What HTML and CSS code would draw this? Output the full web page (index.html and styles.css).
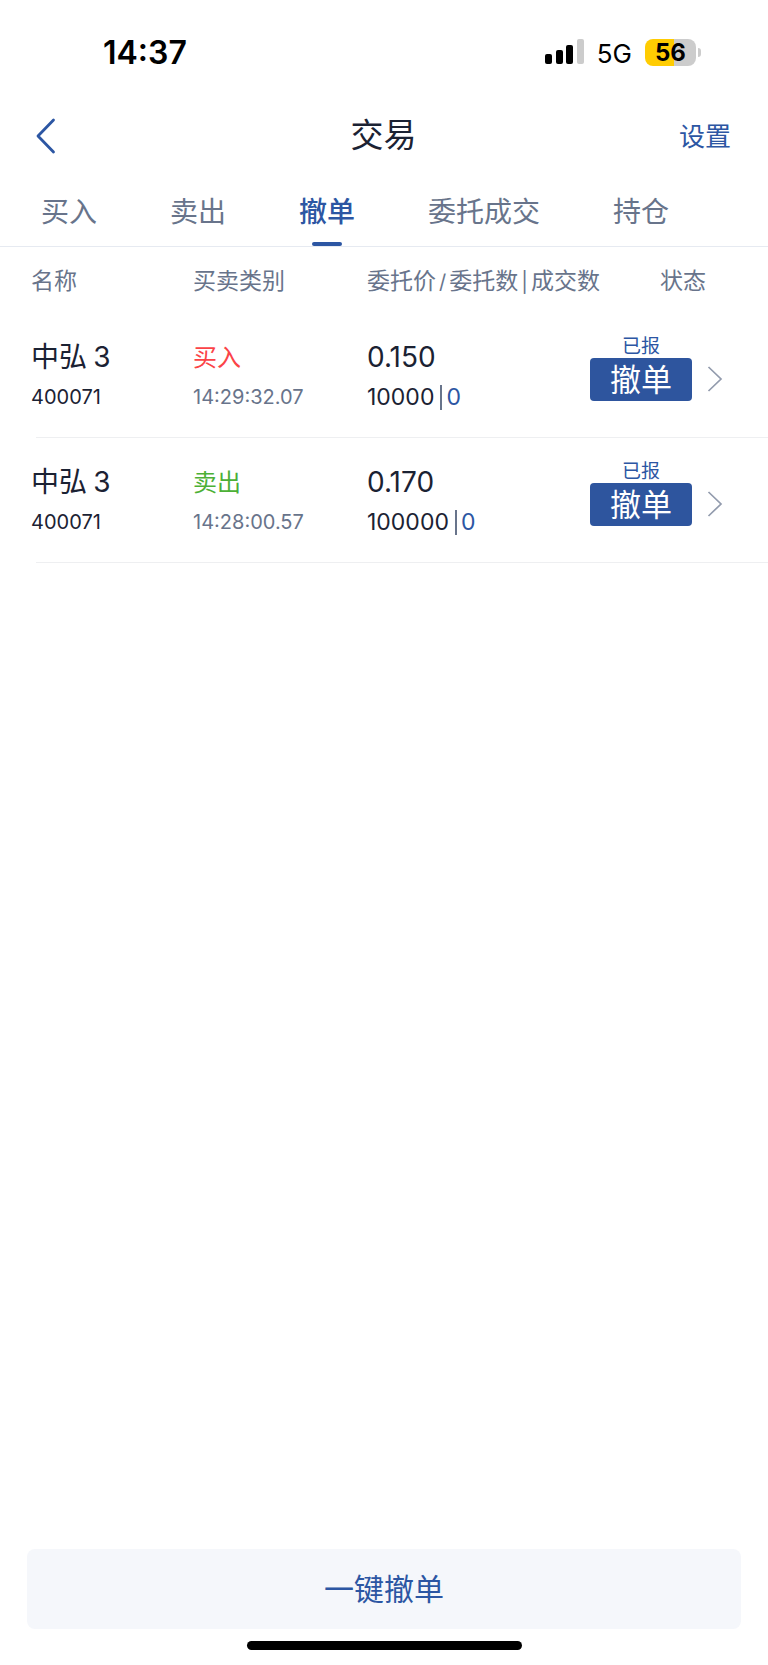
FILE: index.html
```html
<!DOCTYPE html>
<html lang="zh-CN">
<head>
<meta charset="utf-8">
<meta name="viewport" content="width=device-width, initial-scale=1">
<title>交易</title>
<link rel="stylesheet" href="styles.css">
</head>
<body>
<div class="screen">
  <div class="status-bar">
    <span class="clock">14:37</span>
    <div class="indicators">
      <svg class="signal" width="40" height="26" viewBox="0 0 40 26" aria-hidden="true">
        <rect x="0" y="15" width="7" height="10" rx="2"/>
        <rect x="11" y="11" width="7" height="14" rx="2"/>
        <rect x="21" y="6" width="7" height="19" rx="2"/>
        <rect x="32" y="0" width="7" height="25" rx="2" fill="#ccc"/>
      </svg>
      <span class="network">5G</span>
      <span class="battery"><span class="battery-body">56</span><span class="battery-tip"></span></span>
    </div>
  </div>

  <header class="nav-bar">
    <button class="back" type="button" aria-label="返回">
      <svg width="20" height="36" viewBox="0 0 20 36" aria-hidden="true"><path d="M17.500 2 2 18 17.500 34" fill="none" stroke="currentColor" stroke-width="2.800" stroke-linecap="round" stroke-linejoin="round"/></svg>
    </button>
    <h1 class="title">交易</h1>
    <a class="settings" href="#">设置</a>
  </header>

  <nav class="tabs">
    <a class="tab" href="#">买入</a>
    <a class="tab" href="#">卖出</a>
    <a class="tab tab-active" href="#" aria-current="page">撤单</a>
    <a class="tab" href="#">委托成交</a>
    <a class="tab" href="#">持仓</a>
  </nav>

  <main class="content">
    <table class="orders">
      <colgroup>
        <col class="col-name"><col class="col-side"><col class="col-price"><col class="col-state"><col class="col-more">
      </colgroup>
      <thead>
        <tr>
          <th class="cell-name" scope="col">名称</th>
          <th scope="col">买卖类别</th>
          <th scope="col">委托价<span class="sep">/</span>委托数<span class="sep">|</span>成交数</th>
          <th class="head-state" scope="col" colspan="2">状态</th>
        </tr>
      </thead>
      <tbody>
        <tr class="order">
          <td class="cell-name"><div class="main-line"><span class="name">中弘 </span>3</div><div class="code">400071</div></td>
          <td><div class="side buy">买入</div><div class="time">14:29:32.07</div></td>
          <td><div class="main-line">0.150</div><div class="amount">10000<span class="filled">0</span></div></td>
          <td class="cell-state"><div class="state">已报</div><button class="cancel" type="button">撤单</button></td>
          <td class="cell-more"><a class="more" href="#" aria-label="详情"><svg width="16" height="26" viewBox="0 0 16 26" aria-hidden="true"><path d="M1.500 1 14 13 1.500 25" fill="none" stroke="currentColor" stroke-width="1.700"/></svg></a></td>
        </tr>
        <tr class="order">
          <td class="cell-name"><div class="main-line"><span class="name">中弘 </span>3</div><div class="code">400071</div></td>
          <td><div class="side sell">卖出</div><div class="time">14:28:00.57</div></td>
          <td><div class="main-line">0.170</div><div class="amount">100000<span class="filled">0</span></div></td>
          <td class="cell-state"><div class="state">已报</div><button class="cancel" type="button">撤单</button></td>
          <td class="cell-more"><a class="more" href="#" aria-label="详情"><svg width="16" height="26" viewBox="0 0 16 26" aria-hidden="true"><path d="M1.500 1 14 13 1.500 25" fill="none" stroke="currentColor" stroke-width="1.700"/></svg></a></td>
        </tr>
      </tbody>
    </table>
  </main>

  <footer class="bottom">
    <button class="cancel-all" type="button">一键撤单</button>
    <div class="home-bar"></div>
  </footer>
</div>
</body>
</html>
```
FILE: styles.css
```css
* { box-sizing: border-box; }

body {
  margin: 0;
  background: #fff;
  color: #1b2233;
  font-family: Inter, "Noto Sans CJK SC", sans-serif;
}

button { margin: 0; padding: 0; border: 0; background: none; font: inherit; color: inherit; cursor: pointer; }
a { color: inherit; text-decoration: none; }
svg { display: block; }

.screen { display: flex; flex-direction: column; min-height: 100vh; }

.status-bar {
  display: flex;
  align-items: center;
  justify-content: space-between;
  height: 104px;
  padding: 0 67px 0 103px;
  color: #000;
}
.clock { padding-top: 2px; font-size: 32px; font-weight: 600; line-height: 40px; }
.indicators { display: flex; align-items: center; }
.network { margin-left: 12px; padding-top: 3px; font-size: 26px; line-height: 32px; }
.battery { display: flex; align-items: center; gap: 2px; margin-left: 13px; }
.battery-body {
  width: 51px;
  border-radius: 8px;
  background: linear-gradient(to right, #ffcc02 56%, #ccc 56%);
  font-size: 24px;
  font-weight: 700;
  line-height: 27px;
  text-align: center;
}
.battery-tip { width: 3px; height: 9px; border-radius: 0 3px 3px 0; background: #ccc; }

.nav-bar {
  display: grid;
  grid-template-columns: 1fr auto 1fr;
  align-items: center;
  height: 64px;
  padding: 0 37px 0 36px;
}
.back { justify-self: start; color: #2c56a3; }
.title { margin: 0; padding-bottom: 2px; font-size: 33px; font-weight: 400; line-height: 48px; }
.settings { justify-self: end; padding-top: 2px; color: #2c56a3; font-size: 26px; line-height: 40px; }

.tabs {
  display: flex;
  gap: 73px;
  height: 79px;
  padding: 16px 41px 0;
  border-bottom: 1px solid #e6eaf1;
  color: #68748b;
  font-size: 28px;
  line-height: 56px;
}
.tab { display: flex; flex-direction: column; justify-content: space-between; white-space: nowrap; }
.tab-active { color: #2c56a3; font-weight: 500; }
.tab-active::after { content: ""; align-self: center; width: 30px; height: 4px; border-radius: 2px; background: #2c56a3; }

.orders { width: 100%; table-layout: fixed; border-collapse: collapse; }
.col-name { width: 193px; }
.col-side { width: 174px; }
.col-state { width: 122px; }
.col-more { width: 66px; }

th {
  height: 66px;
  padding: 0 0 3px;
  color: #68748b;
  font-size: 23px;
  font-weight: 400;
  text-align: left;
  white-space: nowrap;
}
td { padding: 25px 0 20px; vertical-align: top; white-space: nowrap; }
th.cell-name, td.cell-name { padding-left: 31px; }
.sep { padding: 0 3px; font-size: 20px; }
th.head-state { padding-right: 62px; text-align: right; }

.order { background: linear-gradient(#eeeff1, #eeeff1) 36px 100% / 100% 1px no-repeat; }
.main-line, .side { font-size: 28px; line-height: 39px; }
.name { font-family: "Noto Sans CJK SC", sans-serif; line-height: 1; }
.side { font-size: 24px; }
.buy { color: #fb4347; }
.sell { color: #4cb036; }
.code, .time { font-size: 20px; line-height: 41px; }
.time { color: #68748b; }
.amount { display: flex; align-items: center; gap: 6px; font-size: 23px; line-height: 41px; }
.filled { display: flex; align-items: center; gap: 4px; color: #2c56a3; }
.filled::before { content: ""; width: 2px; height: 25px; background: #68748b; }

td.cell-state { padding: 22px 0 0; text-align: center; }
.state { color: #2c56a3; font-size: 19px; line-height: 23px; }
.cancel {
  display: block;
  width: 102px;
  margin: 0 auto;
  border-radius: 4px;
  background: #2e559e;
  color: #fff;
  font-size: 31px;
  line-height: 43px;
}
td.cell-more { padding: 53px 0 0 5px; }
.more { display: block; color: #929bad; }

.bottom { margin-top: auto; padding: 0 27px 15px; }
.cancel-all {
  display: block;
  width: 100%;
  border-radius: 8px;
  background: #f5f7fb;
  color: #2c56a3;
  font-size: 30px;
  line-height: 80px;
}
.home-bar { width: 275px; height: 9px; margin: 12px auto 0; border-radius: 5px; background: #000; }
```
